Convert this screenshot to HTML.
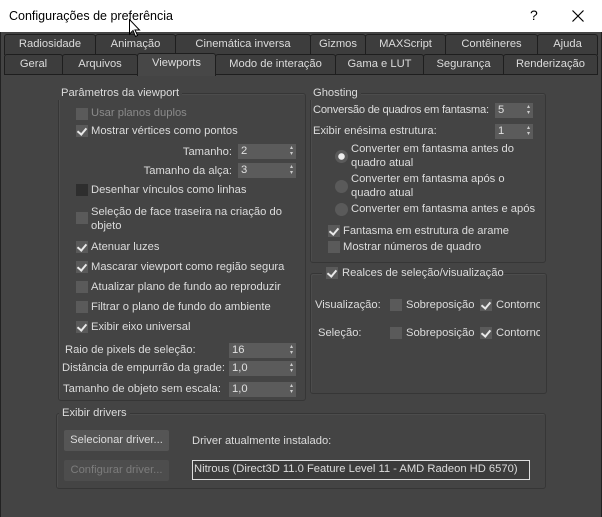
<!DOCTYPE html>
<html><head><meta charset="utf-8"><style>
*{margin:0;padding:0;box-sizing:border-box}
body{width:602px;height:517px;background:#444;font-family:"Liberation Sans",sans-serif;font-size:11.2px;color:#dcdcdc;position:relative;overflow:hidden}
.a{position:absolute;white-space:nowrap;line-height:14px}
.title{position:absolute;left:0;top:0;width:602px;height:32px;background:#fff;color:#000}
.tab{position:absolute;height:21px;background:#3d3d3d;border:1px solid #1e1e1e;border-bottom:none;border-radius:3px 3px 0 0;text-align:center;line-height:19px;color:#dcdcdc}
.tab.act{background:#474747;height:23px;top:53px!important}
.grp{position:absolute;border:1px solid #363636;border-radius:3px;box-shadow:inset 1px 1px 0 #4c4c4c}
.gt{position:absolute;background:#444;padding:0 3px;line-height:14px}
.cb{position:absolute;width:12px;height:12px;background:#5a5a5a}
.cb.d{background:#2e2e2e}
.cb.x::after{content:"";position:absolute;left:3px;top:1px;width:4px;height:7px;border:solid #e8e8e8;border-width:0 2px 2px 0;transform:rotate(40deg)}
.sp{position:absolute;height:15px;background:#5b5b5b;color:#e0e0e0;padding-left:3px;line-height:15px}
.sp::after{content:"\25B4\A\25BE";white-space:pre;position:absolute;right:3px;top:0;font-size:6px;line-height:6px;color:#ccc;padding-top:1px}
.rd{position:absolute;width:13px;height:13px;border-radius:50%;background:#5a5a5a}
.btn{position:absolute;background:#555;border-radius:2px;text-align:center;line-height:21px;height:21px}
</style></head><body>
<div class="title"><span class="a" style="left:9px;top:9px;font-size:12.5px">Configurações de preferência</span><span class="a" style="left:530px;top:8px;font-size:14px">?</span>
<svg style="position:absolute;left:572px;top:10px" width="12" height="12"><path d="M0.5 0.5L11.5 11.5M11.5 0.5L0.5 11.5" stroke="#000" stroke-width="1.2"/></svg></div>
<div style="position:absolute;left:0;top:32px;width:1px;height:485px;background:#222"></div>
<div style="position:absolute;right:0;top:32px;width:1px;height:485px;background:#222"></div>
<div class="tab" style="left:4px;top:34px;width:92px">Radiosidade</div>
<div class="tab" style="left:95px;top:34px;width:81px">Animação</div>
<div class="tab" style="left:175px;top:34px;width:136px">Cinemática inversa</div>
<div class="tab" style="left:310px;top:34px;width:56px">Gizmos</div>
<div class="tab" style="left:365px;top:34px;width:81px">MAXScript</div>
<div class="tab" style="left:445px;top:34px;width:93px">Contêineres</div>
<div class="tab" style="left:537px;top:34px;width:61px">Ajuda</div>
<div class="tab" style="left:4px;top:54px;width:59px">Geral</div>
<div class="tab" style="left:62px;top:54px;width:76px">Arquivos</div>
<div class="tab" style="left:215px;top:54px;width:121px">Modo de interação</div>
<div class="tab" style="left:335px;top:54px;width:89px">Gama e LUT</div>
<div class="tab" style="left:423px;top:54px;width:81px">Segurança</div>
<div class="tab" style="left:503px;top:54px;width:95px">Renderização</div>
<div class="tab act" style="left:137px;width:79px">Viewports</div>
<div style="position:absolute;left:4px;top:74px;width:133px;height:1px;background:#1e1e1e"></div>
<div style="position:absolute;left:216px;top:74px;width:382px;height:1px;background:#1e1e1e"></div>

<div class="grp" style="left:58px;top:93px;width:248px;height:308px"></div>
<span class="gt a" style="left:58px;top:86px">Parâmetros da viewport</span>
<div class="cb" style="left:76px;top:108px"></div><span class="a" style="left:91px;top:106px;color:#8a8a8a">Usar planos duplos</span>
<div class="cb x" style="left:76px;top:125px"></div><span class="a" style="left:91px;top:124px">Mostrar vértices como pontos</span>
<span class="a" style="right:370px;top:145px">Tamanho:</span><div class="sp" style="left:238px;top:144px;width:58px">2</div>
<span class="a" style="right:370px;top:164px">Tamanho da alça:</span><div class="sp" style="left:238px;top:163px;width:58px">3</div>
<div class="cb d" style="left:76px;top:184px"></div><span class="a" style="left:91px;top:183px">Desenhar vínculos como linhas</span>
<div class="cb" style="left:76px;top:212px"></div><span class="a" style="left:91px;top:205px;line-height:14px">Seleção de face traseira na criação do<br>objeto</span>
<div class="cb x" style="left:76px;top:241px"></div><span class="a" style="left:91px;top:240px">Atenuar luzes</span>
<div class="cb x" style="left:76px;top:261px"></div><span class="a" style="left:91px;top:260px">Mascarar viewport como região segura</span>
<div class="cb" style="left:76px;top:281px"></div><span class="a" style="left:91px;top:280px">Atualizar plano de fundo ao reproduzir</span>
<div class="cb" style="left:76px;top:301px"></div><span class="a" style="left:91px;top:300px">Filtrar o plano de fundo do ambiente</span>
<div class="cb x" style="left:76px;top:321px"></div><span class="a" style="left:91px;top:320px">Exibir eixo universal</span>
<span class="a" style="left:65px;top:343px">Raio de pixels de seleção:</span><div class="sp" style="left:229px;top:343px;width:67px">16</div>
<span class="a" style="left:62px;top:361px">Distância de empurrão da grade:</span><div class="sp" style="left:229px;top:361px;width:67px">1,0</div>
<span class="a" style="left:63px;top:382px">Tamanho de objeto sem escala:</span><div class="sp" style="left:229px;top:382px;width:67px">1,0</div>

<div class="grp" style="left:310px;top:93px;width:236px;height:170px"></div>
<span class="gt a" style="left:310px;top:86px">Ghosting</span>
<span class="a" style="left:313px;top:103px;letter-spacing:-0.25px">Conversão de quadros em fantasma:</span><div class="sp" style="left:495px;top:103px;width:38px">5</div>
<span class="a" style="left:313px;top:124px">Exibir enésima estrutura:</span><div class="sp" style="left:495px;top:124px;width:38px">1</div>
<div class="rd" style="left:335px;top:150px;background:radial-gradient(circle,#eee 0 3px,#5a5a5a 3.5px)"></div><span class="a" style="left:351px;top:142px">Converter em fantasma antes do<br>quadro atual</span>
<div class="rd" style="left:335px;top:180px"></div><span class="a" style="left:351px;top:172px">Converter em fantasma após o<br>quadro atual</span>
<div class="rd" style="left:335px;top:203px"></div><span class="a" style="left:351px;top:202px">Converter em fantasma antes e após</span>
<div class="cb x" style="left:328px;top:225px"></div><span class="a" style="left:343px;top:224px">Fantasma em estrutura de arame</span>
<div class="cb" style="left:328px;top:241px"></div><span class="a" style="left:343px;top:240px">Mostrar números de quadro</span>

<div class="grp" style="left:310px;top:273px;width:237px;height:121px"></div>
<div style="position:absolute;left:322px;top:266px;width:176px;height:14px;background:#444"></div>
<div class="cb x" style="left:326px;top:267px"></div><span class="a" style="left:342px;top:266px">Realces de seleção/visualização</span>
<span class="a" style="left:315px;top:298px">Visualização:</span>
<div class="cb" style="left:390px;top:299px"></div><span class="a" style="left:406px;top:298px">Sobreposição</span>
<div class="cb x" style="left:480px;top:299px"></div><span class="a" style="left:496px;top:298px;width:44px;overflow:hidden">Contorno</span>
<span class="a" style="left:318px;top:326px">Seleção:</span>
<div class="cb" style="left:390px;top:327px"></div><span class="a" style="left:406px;top:326px">Sobreposição</span>
<div class="cb x" style="left:480px;top:327px"></div><span class="a" style="left:496px;top:326px;width:44px;overflow:hidden">Contorno</span>

<div class="grp" style="left:56px;top:413px;width:490px;height:76px"></div>
<span class="gt a" style="left:59px;top:406px">Exibir drivers</span>
<div class="btn" style="left:64px;top:430px;width:105px">Selecionar driver...</div>
<div class="btn" style="left:64px;top:460px;width:105px;background:#4d4d4d;color:#7c7c7c">Configurar driver...</div>
<span class="a" style="left:192px;top:434px">Driver atualmente instalado:</span>
<div class="a" style="left:192px;top:460px;width:338px;height:20px;border:1px solid #ddd;background:#3b3b3b;padding-left:1px;line-height:17px">Nitrous (Direct3D 11.0 Feature Level 11 - AMD Radeon HD 6570)</div>

<svg style="position:absolute;left:129px;top:19px" width="12" height="19"><path d="M0.5 0.5L0.5 15L4 11.5L6.5 17.5L8.5 16.5L6 11L10.5 11Z" fill="#fff" stroke="#000"/></svg>
</body></html>
